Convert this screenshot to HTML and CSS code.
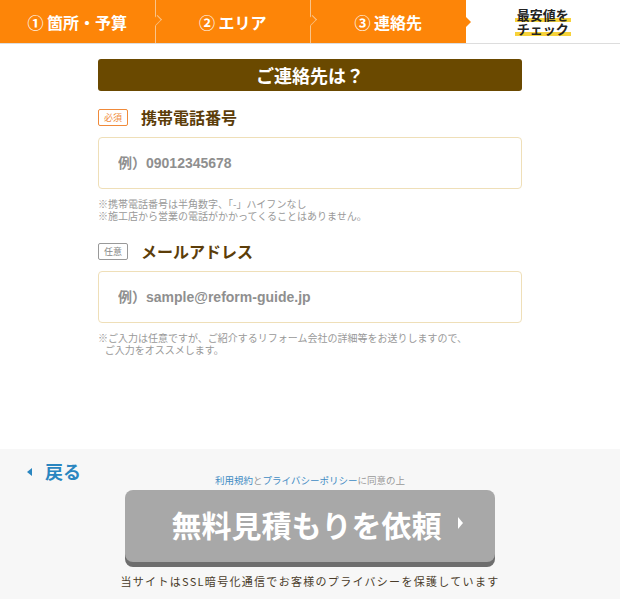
FILE: index.html
```html
<!DOCTYPE html>
<html lang="ja">
    <head>
        <meta charset="utf-8">
        <title>ご連絡先</title>
        <link rel="stylesheet" href="styles.css">
    </head>
    <body>
        <div class="steps">
            <div class="step done">① 箇所・予算</div>
            <div class="step done">② エリア</div>
            <div class="step current">③ 連絡先</div>
            <div class="step last">
                <span class="mark">最安値を</span>
                <span class="mark">チェック</span>
            </div>
        </div>

        <div class="form">
            <h2 class="title_bar">ご連絡先は？</h2>

            <div class="field">
                <div class="label_row">
                    <span class="badge required">必須</span>
                    <span class="label">携帯電話番号</span>
                </div>
                <input class="text_input" type="text" placeholder="例）09012345678">
                <p class="note">※携帯電話番号は半角数字、「-」ハイフンなし<br>※施工店から営業の電話がかかってくることはありません。</p>
            </div>

            <div class="field">
                <div class="label_row">
                    <span class="badge optional">任意</span>
                    <span class="label">メールアドレス</span>
                </div>
                <input class="text_input" type="text" placeholder="例）sample@reform-guide.jp">
                <p class="note">※ご入力は任意ですが、ご紹介するリフォーム会社の詳細等をお送りしますので、<br>&nbsp;&nbsp;&nbsp;ご入力をオススメします。</p>
            </div>
        </div>

        <div class="footer">
            <a class="back" href="#"><span class="back_arrow"></span>戻る</a>
            <p class="agree"><a href="#">利用規約</a>と<a href="#">プライバシーポリシー</a>に同意の上</p>
            <button class="submit">無料見積もりを依頼<span class="submit_arrow"></span></button>
            <p class="ssl">当サイトはSSL暗号化通信でお客様のプライバシーを保護しています</p>
        </div>
    </body>
</html>
```

FILE: styles.css
```css
body {
    margin: 0;
    font-family: "Noto Sans CJK JP", "Liberation Sans", sans-serif;
    background-color: #fff;
    color: #333;
}

/* step bar */
.steps {
    display: flex;
    height: 43px;
    border-bottom: 1px solid #ddd;
}
.step {
    position: relative;
    flex: 1;
    display: flex;
    align-items: center;
    justify-content: center;
    font-size: 16px;
    font-weight: bold;
    color: #fff;
}
.done {
    background-color: #fd8508;
    border-right: 1px solid #f9c48a;
}
.done::after {
    content: "";
    position: absolute;
    right: -6px;
    top: 16px;
    width: 8px;
    height: 8px;
    border-top: 1px solid #f9c48a;
    border-right: 1px solid #f9c48a;
    background-color: #fd8508;
    transform: rotate(45deg) scale(0.7, 1);
    z-index: 1;
}
.current {
    background-color: #fd8508;
}
.current::after {
    content: "";
    position: absolute;
    right: -5px;
    top: 17px;
    border-left: 5px solid #fd8508;
    border-top: 5px solid transparent;
    border-bottom: 5px solid transparent;
}
.last {
    flex-direction: column;
    color: #222;
    font-size: 13px;
    padding-top: 1px;
}
.mark {
    display: block;
    height: 14px;
    line-height: 13px;
    padding: 0 2px;
    background: linear-gradient(transparent 74%, #f7d23a 74%, #f7d23a 100%);
}

/* form */
.form {
    width: 424px;
    margin: 0 auto;
    padding: 15px 0 93px;
}
.title_bar {
    margin: 0;
    height: 32px;
    line-height: 32px;
    background-color: #6a4900;
    border-radius: 3px;
    color: #fff;
    font-size: 18px;
    text-align: center;
}
.field {
    margin-top: 17px;
}
.field + .field {
    margin-top: 20px;
}
.label_row {
    display: flex;
    align-items: center;
    gap: 13px;
    height: 18px;
}
.badge {
    display: inline-block;
    width: 28px;
    height: 15px;
    line-height: 15px;
    font-size: 9px;
    text-align: center;
    border-radius: 2px;
    font-weight: normal;
}
.required {
    border: 1px solid #f08a3a;
    color: #f08a3a;
}
.optional {
    border: 1px solid #999;
    color: #888;
}
.label {
    font-size: 16px;
    font-weight: bold;
    color: #5c3d09;
}
.text_input {
    display: block;
    box-sizing: border-box;
    width: 100%;
    height: 52px;
    margin-top: 11px;
    padding: 0 19px;
    border: 1px solid #efdfb8;
    border-radius: 4px;
    font-family: "Liberation Sans", "Noto Sans CJK JP", sans-serif;
    font-size: 14px;
    font-weight: bold;
}
.text_input::placeholder {
    color: #8f8f8f;
}
.note {
    margin: 9px 0 0;
    font-size: 10px;
    line-height: 12px;
    color: #999;
}

/* footer */
.footer {
    position: relative;
    background-color: #f7f7f7;
    padding: 25px 0 11px;
    text-align: center;
}
.back {
    position: absolute;
    left: 27px;
    top: 9px;
    font-size: 18px;
    font-weight: bold;
    color: #2a86c0;
    text-decoration: none;
}
.back_arrow {
    display: inline-block;
    border-right: 5px solid #2a86c0;
    border-top: 4px solid transparent;
    border-bottom: 4px solid transparent;
    margin-right: 13px;
    vertical-align: 3px;
}
.agree {
    margin: 0;
    font-size: 9.5px;
    line-height: 12px;
    color: #999;
}
.agree a {
    color: #3f8cc4;
    text-decoration: none;
}
.submit {
    display: block;
    width: 370px;
    height: 72px;
    margin: 4px auto 0;
    border: none;
    border-radius: 8px;
    background-color: #a8a8a8;
    box-shadow: 0 5px 0 #6e6e6e;
    color: #fff;
    font-family: "Noto Sans CJK JP", sans-serif;
    font-size: 30px;
    font-weight: bold;
    padding: 0 0 4px 14px;
}
.submit_arrow {
    display: inline-block;
    border-left: 5px solid #fff;
    border-top: 6px solid transparent;
    border-bottom: 6px solid transparent;
    margin-left: 16px;
    vertical-align: 8px;
}
.ssl {
    margin: 12px 0 0;
    font-size: 11px;
    line-height: 14px;
    color: #4a3c2a;
    letter-spacing: 1.3px;
}
```
